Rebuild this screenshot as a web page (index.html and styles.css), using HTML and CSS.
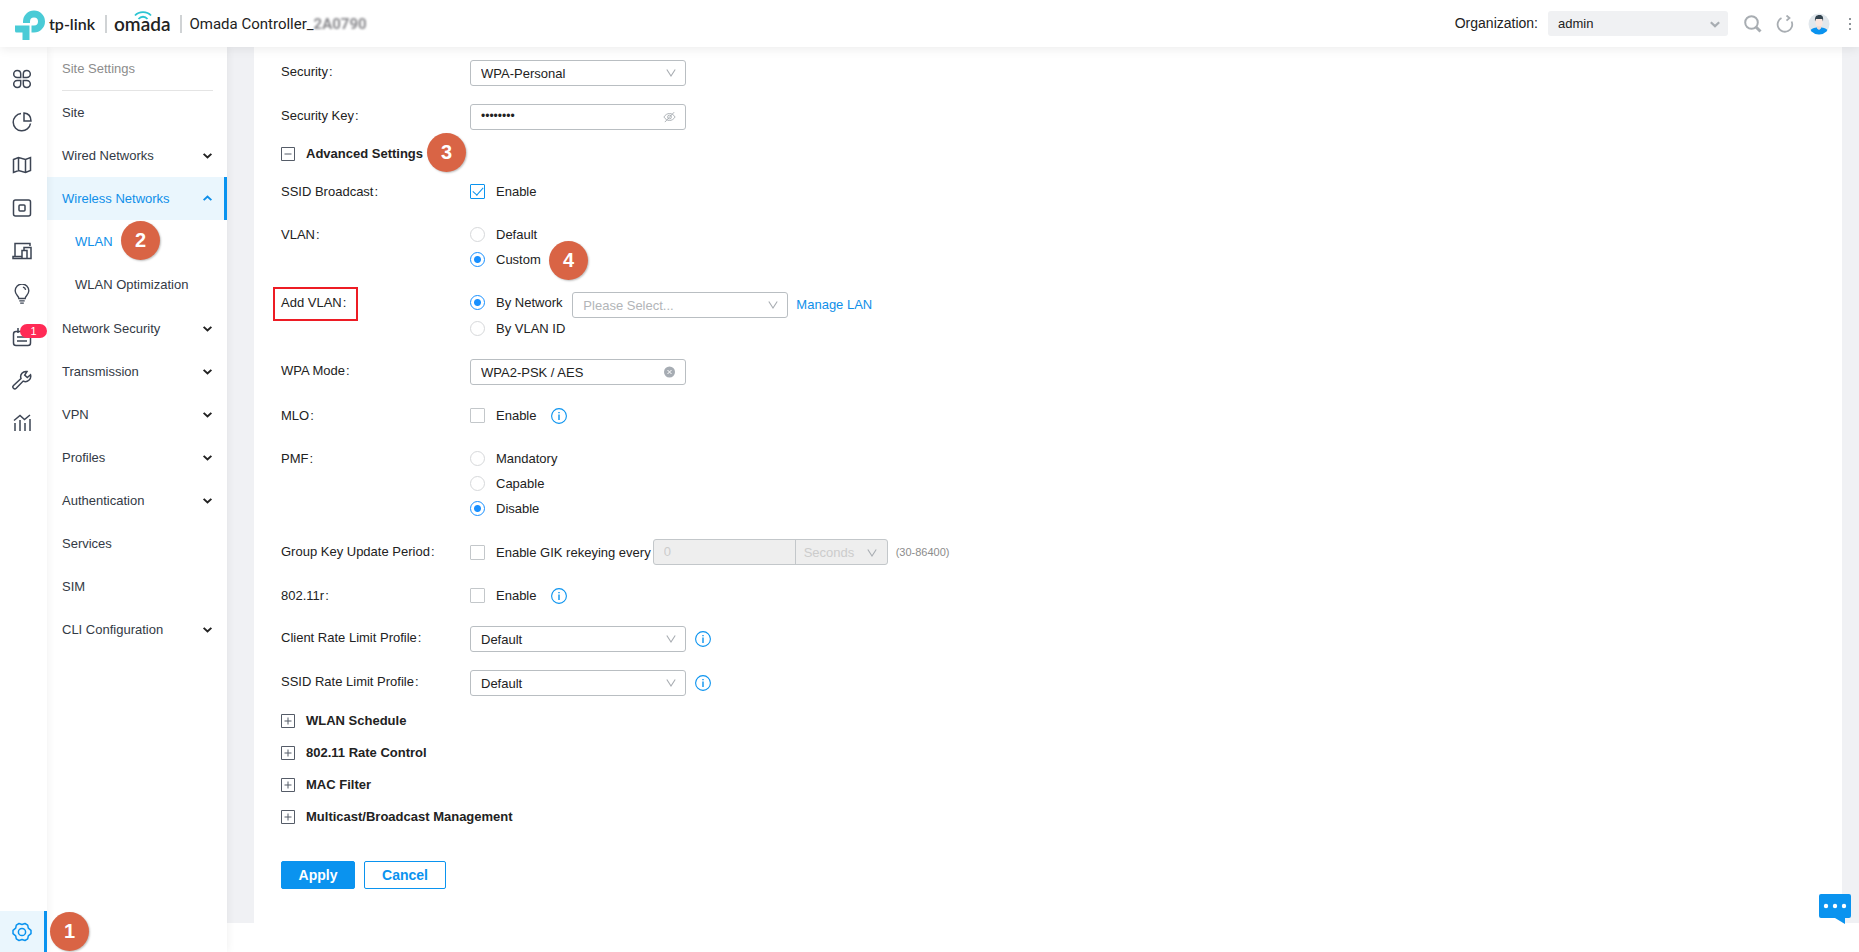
FILE: index.html
```html
<!DOCTYPE html>
<html lang="en">
<head>
<meta charset="utf-8">
<title>Omada Controller</title>
<link rel="stylesheet" href="styles.css">
</head>
<body>
<svg class="defs" aria-hidden="true">
  <symbol id="chev" viewBox="0 0 10 10"><path d="M1.5 3.5 5 6.8l3.500-3.300" fill="none" stroke="currentColor" stroke-width="1.8"/></symbol>
  <symbol id="vee" viewBox="0 0 10 10"><path d="M.8 1.500 5 8 9.200 1.500" fill="none" stroke="currentColor" stroke-width="1.1"/></symbol>
  <symbol id="plus" viewBox="0 0 14 14"><path d="M.5.5h13v13H.5zM3.500 7h7M7 3.500v7" fill="none" stroke="currentColor"/></symbol>
  <symbol id="minus" viewBox="0 0 14 14"><path d="M.5.5h13v13H.5zM3.500 7h7" fill="none" stroke="currentColor"/></symbol>
  <symbol id="info" viewBox="0 0 16 16"><circle cx="8" cy="8" r="7.400" fill="none" stroke="currentColor" stroke-width="1.1"/><path d="M8 6.500v5.500M8 4v1.300" fill="none" stroke="currentColor" stroke-width="1.400"/></symbol>
</svg>

<header class="topbar">
  <div class="brand">
    <svg class="brand-mark" viewBox="0 -1 30 30" aria-hidden="true"><path d="M8 13V11.500a11 11 0 1 1 11 11H16.500V15.500H19a4 4 0 1 0-4-4V13zM0 15.500h14.500V30H7.500V22.500H1.500Q0 22.500 0 21z" fill="#4acbd6"/></svg>
    <span class="brand-tp">tp-link</span>
    <span class="rule"></span>
    <span class="brand-omada">omada<svg class="waves" viewBox="0 0 18 10" aria-hidden="true"><path d="M1 4.500C5 0 13 0 17 4.500M4.500 8c2.500-3 6.500-3 9 0" fill="none" stroke="#2cc4d2" stroke-width="1.800"/></svg></span>
    <span class="rule"></span>
    <h1 class="title">Omada Controller_<span class="masked">2A0790</span></h1>
  </div>
  <div class="tools">
    <label for="org">Organization:</label>
    <span class="org-select"><select id="org"><option>admin</option></select><svg class="org-arrow" aria-hidden="true"><use href="#chev"/></svg></span>
    <button class="tool" aria-label="Search"><svg viewBox="0 0 18 18"><circle cx="7.500" cy="7.500" r="6.300" fill="none" stroke="currentColor" stroke-width="2"/><path d="m12 12 4.500 4.500" stroke="currentColor" stroke-width="3"/></svg></button>
    <button class="tool" aria-label="Refresh"><svg viewBox="0 0 18 18"><path d="M5.500 3A7.300 7.300 0 1 0 15.600 6.500M10.500.5l3 2.500-3 2.700" fill="none" stroke="currentColor" stroke-width="1.800"/></svg></button>
    <button class="tool avatar" aria-label="Account"><svg viewBox="0 0 22 22"><clipPath id="face"><circle cx="11" cy="11" r="10.500"/></clipPath><g clip-path="url(#face)"><rect width="22" height="22" fill="#e1e7ec"/><path d="M1 22c0-6 4-7.500 10-7.500S21 16 21 22z" fill="#0a93ef"/><path d="M9 11h4v4.500l-2 1.500-2-1.500z" fill="#f2d8cf"/><ellipse cx="11" cy="9" rx="3.600" ry="4.500" fill="#fae6df"/><path d="M7 8.500C6.500 4 8 2 11.500 2S15.500 4.500 15 8.500l-.8-2.500H8z" fill="#33434f"/></g></svg></button>
    <button class="more" aria-label="More"><svg viewBox="0 0 4 14"><path d="M1 1h2v2H1zM1 6h2v2H1zM1 11h2v2H1z" fill="currentColor"/></svg></button>
  </div>
</header>

<div class="shell">
  <nav class="rail" aria-label="Main">
    <a href="#" aria-label="Dashboard"><svg viewBox="0 0 20 20"><path d="M5.200 1.500c2.300 0 3.500 1.500 3.500 3.500v3.500H5.200a3.500 3.500 0 0 1 0-7zM14.800 1.500c-2.300 0-3.500 1.500-3.500 3.500v3.500h3.500a3.500 3.500 0 0 0 0-7zM5.200 18.500c2.300 0 3.500-1.500 3.500-3.500v-3.500H5.200a3.500 3.500 0 0 0 0 7zM14.800 18.500c-2.300 0-3.500-1.500-3.500-3.500v-3.500h3.500a3.500 3.500 0 0 1 0 7z"/></svg></a>
    <a href="#" aria-label="Statistics"><svg viewBox="0 0 20 20"><path d="M9 1.500a8.700 8.700 0 1 0 9.500 10M12 1v8h7c0-5-2.500-7.500-7-8z"/></svg></a>
    <a href="#" aria-label="Map"><svg viewBox="0 0 20 20"><path d="m1.500 4.500 5-2 7 2 5-2v13l-5 2-7-2-5 2zM6.500 2.500v13M13.500 4.500v13"/></svg></a>
    <a href="#" aria-label="Devices"><svg viewBox="0 0 20 20"><rect x="1.500" y="2" width="17" height="16" rx="2"/><rect x="7" y="7" width="6" height="6" rx="1"/></svg></a>
    <a href="#" aria-label="Clients"><svg viewBox="0 0 20 20"><path d="M3 15V2.500h15V5M1 17.500h9v-2H1zM10 17.500V9.500h5v8zM12 9V6.500h7v11h-4"/></svg></a>
    <a href="#" aria-label="Insights"><svg viewBox="0 0 20 22"><path d="M6.500 16c0-3-4-4-4-8.500a7.500 7.500 0 0 1 15 0c0 4.500-4 5.500-4 8.500zM7 18.500h6M8 21h4M11 3.500q2.500.5 3 3"/></svg></a>
    <a href="#" aria-label="Logs, 1 new"><svg viewBox="0 0 20 20"><path d="M4 4.500h12q2.500 0 2.500 2.500v9q0 2.500-2.500 2.500H4Q1.500 18.500 1.500 16V7Q1.500 4.500 4 4.500zM6 1v5M14 1v5M5 10h10M5 14h10"/></svg><span class="count">1</span></a>
    <a href="#" aria-label="Tools"><svg viewBox="0 0 20 20"><path d="M15 1.500a5.300 5.300 0 0 0-6 7L1.500 15.500a1.800 1.800 0 0 0 2.700 2.800l7-7.200a5.300 5.300 0 0 0 7.300-6.300l-3.200 2.700-2.600-2.400z"/></svg></a>
    <a href="#" aria-label="Reports"><svg viewBox="0 0 20 20"><path d="M3 10v8M8 7v11M13 10v8M18 6v12M2 7.500l6-5 4.500 4L18 2"/></svg></a>
    <a href="#" class="rail-active" aria-label="Settings"><svg viewBox="0 0 20 20"><path d="m7 1.500 3 1 3-1 2.700 1.600.6 3 2.700 2.200v3.400l-2.700 2.200-.6 3L13 18.500l-3-1-3 1-2.700-1.600-.6-3L1 11.700V8.300l2.700-2.200.6-3z" stroke-linejoin="round"/><circle cx="10" cy="10" r="3.600"/></svg><span class="step step-rail">1</span></a>
  </nav>

  <nav class="side" aria-label="Site settings">
    <h2 class="side-title">Site Settings</h2>
    <a href="#">Site</a>
    <a href="#">Wired Networks<svg><use href="#chev"/></svg></a>
    <a href="#" class="side-active">Wireless Networks<svg class="up"><use href="#chev"/></svg></a>
    <div class="submenu">
      <a href="#" class="current">WLAN<span class="step step-wlan">2</span></a>
      <a href="#">WLAN Optimization</a>
    </div>
    <a href="#">Network Security<svg><use href="#chev"/></svg></a>
    <a href="#">Transmission<svg><use href="#chev"/></svg></a>
    <a href="#">VPN<svg><use href="#chev"/></svg></a>
    <a href="#">Profiles<svg><use href="#chev"/></svg></a>
    <a href="#">Authentication<svg><use href="#chev"/></svg></a>
    <a href="#">Services</a>
    <a href="#">SIM</a>
    <a href="#">CLI Configuration<svg><use href="#chev"/></svg></a>
  </nav>

  <main class="main">
    <form class="card">
      <div class="row"><label class="name" for="security">Security<i>:</i></label>
        <div class="field"><span class="box"><select id="security"><option>WPA-Personal</option></select><svg class="arrow"><use href="#vee"/></svg></span></div></div>
      <div class="row"><label class="name" for="key">Security Key<i>:</i></label>
        <div class="field"><span class="box"><input id="key" type="password" value="password"><button type="button" class="inner" aria-label="Show key"><svg viewBox="0 0 14 12"><path d="M1 6c3-5 9-5 12 0-3 5-9 5-12 0zM12 .8 2 11.500" fill="none" stroke="currentColor"/><circle cx="7" cy="6" r="2" fill="none" stroke="currentColor"/></svg></button></span></div></div>

      <button type="button" class="fold fold-open"><svg><use href="#minus"/></svg>Advanced Settings<span class="step step-advanced">3</span></button>

      <div class="row"><span class="name">SSID Broadcast<i>:</i></span>
        <div class="field"><label class="choice"><input type="checkbox" checked>Enable</label></div></div>
      <div class="row"><span class="name">VLAN<i>:</i></span>
        <div class="stack"><label class="choice"><input type="radio" name="vlan">Default</label>
          <label class="choice"><input type="radio" name="vlan" checked>Custom<span class="step step-custom">4</span></label></div></div>
      <div class="row"><span class="name marked">Add VLAN<i>:</i></span>
        <div class="field add-vlan">
          <div class="stack loose"><label class="choice"><input type="radio" name="addvlan" checked>By Network</label>
            <label class="choice"><input type="radio" name="addvlan">By VLAN ID</label></div>
          <div class="network"><span class="box"><select class="empty" aria-label="Network"><option>Please Select...</option></select><svg class="arrow"><use href="#vee"/></svg></span><a href="#">Manage LAN</a></div>
        </div></div>
      <div class="row"><label class="name" for="wpa">WPA Mode<i>:</i></label>
        <div class="field"><span class="box"><select id="wpa"><option>WPA2-PSK / AES</option></select><button type="button" class="inner" aria-label="Clear"><svg viewBox="0 0 12 12"><circle cx="6" cy="6" r="5.500" fill="#a6acb3"/><path d="m4 4 4 4M8 4 4 8" stroke="#fff"/></svg></button></span></div></div>
      <div class="row"><span class="name">MLO<i>:</i></span>
        <div class="field with-info"><label class="choice"><input type="checkbox">Enable</label><svg class="info"><use href="#info"/></svg></div></div>
      <div class="row"><span class="name">PMF<i>:</i></span>
        <div class="stack"><label class="choice"><input type="radio" name="pmf">Mandatory</label>
          <label class="choice"><input type="radio" name="pmf">Capable</label>
          <label class="choice"><input type="radio" name="pmf" checked>Disable</label></div></div>
      <div class="row"><span class="name">Group Key Update Period<i>:</i></span>
        <div class="field rekey"><label class="choice"><input type="checkbox">Enable GIK rekeying every</label>
          <span class="period"><input type="text" value="0" aria-label="Period" disabled><span class="unit"><select aria-label="Unit" disabled><option>Seconds</option></select><svg class="arrow"><use href="#vee"/></svg></span></span>
          <span class="hint">(30-86400)</span></div></div>
      <div class="row"><span class="name">802.11r<i>:</i></span>
        <div class="field with-info"><label class="choice"><input type="checkbox">Enable</label><svg class="info"><use href="#info"/></svg></div></div>
      <div class="row"><label class="name" for="client">Client Rate Limit Profile<i>:</i></label>
        <div class="field"><span class="box"><select id="client"><option>Default</option></select><svg class="arrow"><use href="#vee"/></svg></span><svg class="info"><use href="#info"/></svg></div></div>
      <div class="row"><label class="name" for="ssid">SSID Rate Limit Profile<i>:</i></label>
        <div class="field"><span class="box"><select id="ssid"><option>Default</option></select><svg class="arrow"><use href="#vee"/></svg></span><svg class="info"><use href="#info"/></svg></div></div>

      <div class="folds">
        <button type="button" class="fold"><svg><use href="#plus"/></svg>WLAN Schedule</button>
        <button type="button" class="fold"><svg><use href="#plus"/></svg>802.11 Rate Control</button>
        <button type="button" class="fold"><svg><use href="#plus"/></svg>MAC Filter</button>
        <button type="button" class="fold"><svg><use href="#plus"/></svg>Multicast/Broadcast Management</button>
      </div>
      <div class="actions"><button type="button" class="btn primary">Apply</button><button type="button" class="btn">Cancel</button></div>
    </form>
  </main>
</div>
<button class="chat" aria-label="Chat"><svg viewBox="0 0 32 30"><path d="M2 0h28a2 2 0 0 1 2 2v20a2 2 0 0 1-2 2h-4v6l-10-6H2a2 2 0 0 1-2-2V2a2 2 0 0 1 2-2z" fill="#0a93ef"/><g fill="#fff"><circle cx="7" cy="12" r="2.200"/><circle cx="16" cy="12" r="2.200"/><circle cx="25" cy="12" r="2.200"/></g></svg></button>
</body>
</html>
```

FILE: styles.css
```css
* { box-sizing: border-box; }
body {
  margin: 0;
  min-height: 100vh;
  display: flex;
  flex-direction: column;
  background: #fff;
  color: #222;
  font: 13px/25px "Liberation Sans", Arial, sans-serif;
}
button, input, select { font: inherit; color: inherit; margin: 0; }
button { border: 0; padding: 0; background: none; }
select { appearance: none; }
a { color: #0f8fe9; text-decoration: none; }
.defs { display: none; }

/* Top bar */
.topbar {
  position: relative;
  z-index: 4;
  height: 47px;
  display: flex;
  justify-content: space-between;
  align-items: center;
  padding: 0 7px 0 15px;
  background: #fff;
  box-shadow: 0 2px 10px rgba(0, 0, 0, .08);
}
.brand, .tools { display: flex; align-items: center; }
.brand-mark { width: 30px; height: 30px; margin-right: 4px; overflow: visible; }
.brand-tp { font: 600 16px/24px Lato, sans-serif; }
.rule { width: 2px; height: 18px; margin: 0 7px 0 10px; background: #d0d3d5; }
.brand-omada { position: relative; font: 600 19px/24px Lato, sans-serif; }
.waves { position: absolute; left: 20px; top: -1px; width: 18px; height: 10px; }
.title { margin: 0; font: 400 15px/24px Roboto, sans-serif; }
.masked { color: #8a8a8e; font-weight: 700; filter: blur(1px); }
.tools { font-size: 14px; }
.org-select { position: relative; margin: 0 16px 0 10px; }
.org-select select {
  display: block;
  width: 180px;
  height: 25px;
  padding: 0 10px 2px;
  border: 0;
  border-radius: 3px;
  background: #f0f1f3;
  font-size: 13px;
}
.org-arrow { position: absolute; right: 7px; top: 7px; width: 12px; height: 12px; color: #a8adb2; }
.tool { width: 18px; height: 18px; margin-right: 14px; color: #a8adb2; }
.tool svg, .more svg { display: block; width: 100%; height: 100%; }
.avatar { width: 22px; height: 22px; margin-right: 18px; }
.more { width: 4px; height: 14px; color: #8e9499; }

/* Frame */
.shell { flex: 1; display: flex; }
.rail {
  position: relative;
  z-index: 3;
  width: 47px;
  padding-top: 10px;
  display: flex;
  flex-direction: column;
  background: #fff;
  box-shadow: 1px 0 8px rgba(0, 0, 0, .06);
}
.rail a {
  position: relative;
  height: 43px;
  padding: 0 3px 0 0;
  display: flex;
  align-items: center;
  justify-content: center;
  color: #3d4554;
}
.rail svg { width: 20px; height: 20px; fill: none; stroke: currentColor; stroke-width: 1.5; }
.rail .rail-active {
  height: 41px;
  margin-top: auto;
  padding-right: 0;
  border-right: 3px solid #0a93ef;
  background: #eaf6fd;
  color: #0a93ef;
}
.count {
  position: absolute;
  right: 0;
  top: 9px;
  width: 27px;
  border-radius: 7px;
  background: #ff2a55;
  color: #fff;
  font-size: 11px;
  line-height: 14px;
  text-align: center;
}
.side {
  position: relative;
  z-index: 2;
  width: 180px;
  background: #fff;
  box-shadow: 1px 0 8px rgba(0, 0, 0, .06);
}
.side-title {
  height: 44px;
  margin: 0 14px 0 15px;
  border-bottom: 1px solid #e4e4e4;
  color: #8c8c8c;
  font-size: 13px;
  font-weight: 400;
  line-height: 43px;
}
.side a {
  display: flex;
  align-items: center;
  justify-content: space-between;
  height: 43px;
  padding: 0 14px 0 15px;
  color: #333a45;
}
.side svg { width: 11px; height: 11px; color: #222; }
.side .side-active { padding-right: 11px; border-right: 3px solid #0a93ef; background: #eaf6fd; color: #0f8fe9; }
.side .up { color: #0f8fe9; transform: rotate(180deg); }
.submenu { margin-bottom: 1px; }
.submenu a { position: relative; padding-left: 28px; }
.submenu .current { color: #0f8fe9; }

/* Numbered step markers */
.step {
  position: absolute;
  z-index: 5;
  width: 39px;
  height: 39px;
  border-radius: 50%;
  background: #d96445;
  box-shadow: 1px 1px 2px rgba(0, 0, 0, .25);
  color: #fff;
  font-size: 20px;
  font-weight: 700;
  line-height: 38px;
  text-align: center;
}
.step-rail { left: 50px; top: 1px; }
.step-wlan { left: 74px; top: 1px; }
.step-advanced { left: 146px; top: -11px; }
.step-custom { left: 79px; top: -6px; }

/* Form */
.main { flex: 1; align-self: flex-start; padding: 0 17px 0 27px; background: #f0f1f4; }
.card { display: flex; flex-direction: column; gap: 18px; padding: 13px 27px 34px; background: #fff; }
.row { display: grid; grid-template-columns: 189px 1fr; align-items: start; }
.name { position: relative; justify-self: start; }
label.name { line-height: 23px; }
.name i { margin-left: 1px; font-style: normal; }
.marked::after {
  content: "";
  position: absolute;
  inset: -3px -12px -6px -8px;
  border: 2px solid #ed1c24;
}
.field { display: flex; align-items: center; gap: 9px; }
.stack { display: flex; flex-direction: column; align-items: flex-start; }
.loose { gap: 1px; }
.add-vlan { align-items: flex-start; gap: 7px; }
.network { display: flex; align-items: center; gap: 8px; margin-top: 2px; }
.network a { line-height: 22px; }
.with-info { gap: 15px; }
.choice { position: relative; display: flex; align-items: center; height: 25px; white-space: nowrap; }
.choice input {
  appearance: none;
  width: 15px;
  height: 15px;
  margin-right: 11px;
  border: 1px solid #c3c7ca;
  border-radius: 1px;
  background: #fff;
}
.choice input[type="radio"] { border-color: #d6d8da; border-radius: 50%; }
.choice input[type="radio"]:checked {
  border-color: #1890ff;
  background: radial-gradient(circle, #1890ff 3px, #fff 4px);
}
.choice input[type="checkbox"]:checked { display: grid; border-color: #0a93ef; }
.choice input[type="checkbox"]:checked::before {
  content: "";
  width: 5px;
  height: 9px;
  margin: 0 0 2px 4px;
  border: solid #0a93ef;
  border-width: 0 1px 1px 0;
  transform: rotate(42deg);
}
.box { position: relative; width: 216px; height: 26px; }
.box select, .box input {
  display: block;
  width: 100%;
  height: 26px;
  padding: 0 30px 4px 10px;
  border: 1px solid #b9bec2;
  border-radius: 3px;
  background: #fff;
  color: #222;
}
.box input { font-size: 12px; padding-bottom: 2px; }
.box .empty { padding-bottom: 0; color: #b2b5b8; }
.arrow { position: absolute; right: 10px; top: 8px; width: 10px; height: 10px; color: #a8adb2; pointer-events: none; }
.inner { position: absolute; right: 10px; top: 7px; width: 13px; height: 12px; color: #a8adb2; }
.inner svg { display: block; width: 100%; height: 100%; }
.info { width: 16px; height: 16px; color: #0a93ef; }
.rekey { gap: 2px; }
.period { display: flex; width: 235px; height: 26px; border: 1px solid #c3c7ca; border-radius: 3px; background: #eee; }
.period input, .period select {
  width: 100%;
  height: 24px;
  padding: 0 10px 2px;
  border: 0;
  background: none;
  color: #ccc;
  opacity: 1;
}
.period input { flex: 1; min-width: 0; }
.unit { position: relative; width: 92px; border-left: 1px solid #c3c7ca; }
.unit select { padding: 0 8px 4px; }
.hint { margin-left: 6px; color: #8c8c8c; font-size: 11px; }

.fold {
  position: relative;
  display: flex;
  align-items: center;
  align-self: flex-start;
  gap: 11px;
  height: 19px;
  font-weight: 700;
}
.fold svg { width: 14px; height: 14px; color: #555c68; }
.fold-open { margin: -4px 0 -2px; }
.folds { display: flex; flex-direction: column; gap: 13px; margin-top: -3px; }
.actions { display: flex; gap: 9px; margin-top: 17px; }
.btn {
  min-width: 82px;
  height: 28px;
  border: 1px solid #0a93ef;
  border-radius: 2px;
  color: #0a93ef;
  font-size: 14px;
  font-weight: 700;
}
.primary { min-width: 74px; background: #0a93ef; color: #fff; }
.chat { position: fixed; z-index: 6; right: 8px; bottom: 28px; width: 32px; height: 30px; }
.chat svg { display: block; width: 100%; height: 100%; }
```
